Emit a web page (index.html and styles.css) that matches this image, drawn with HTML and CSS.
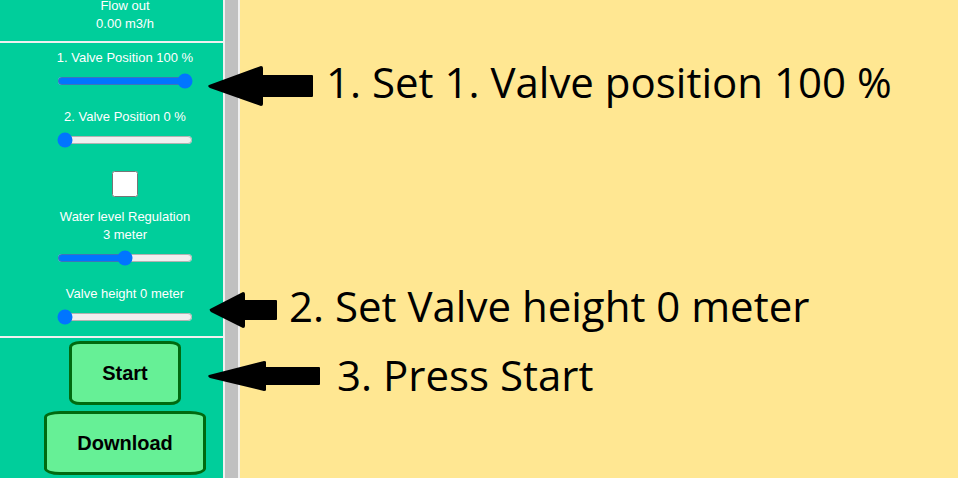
FILE: index.html
```html
<!DOCTYPE html>
<html lang="en">
<head>
<meta charset="utf-8">
<title>Valve control</title>
<link rel="stylesheet" href="styles.css">
</head>
<body>
<div class="app">
  <aside class="sidebar">
    <section class="reading">
      <div>Flow out</div>
      <div>0.00 m3/h</div>
    </section>
    <form class="controls">
      <div class="field">
        <label for="valve1">1. Valve Position 100 %</label>
        <input class="slider" id="valve1" type="range" min="0" max="100" value="100">
      </div>
      <div class="field">
        <label for="valve2">2. Valve Position 0 %</label>
        <input class="slider" id="valve2" type="range" min="0" max="100" value="0">
      </div>
      <div class="regulation">
        <input class="check" id="regulation" type="checkbox">
        <div class="field">
          <div class="caption">
            <label for="regulation">Water level Regulation</label>
            <label for="level">3 meter</label>
          </div>
          <input class="slider" id="level" type="range" min="0" max="6" value="3">
        </div>
      </div>
      <div class="field">
        <label for="height">Valve height 0 meter</label>
        <input class="slider" id="height" type="range" min="0" max="6" value="0">
      </div>
    </form>
    <section class="actions">
      <button class="action" type="button">Start</button>
      <button class="action" type="button">Download</button>
    </section>
  </aside>
  <div class="divider"></div>
  <main class="canvas"></main>
  <div class="callout callout-first">
    <svg width="106" height="40" viewBox="0 0 106 40" aria-hidden="true"><path d="M1 19 L53 0 Q55 0 55 2 V9 H104 Q105 9 105 10 V30 Q105 31 104 31 H55 V38 Q55 40 53 40 L2 22 Q-1 20 1 19Z"/></svg>
    <span>1. Set 1. Valve position 100 %</span>
  </div>
  <div class="callout callout-second">
    <svg width="69" height="38" viewBox="0 0 69 38" aria-hidden="true"><path d="M2 17 L35 0 Q37 0 37 2 V8 H68 Q69 8 69 9 V27 Q69 28 68 28 H37 V34 Q37 36 35 36 L3 20 Q1 18 2 17Z"/></svg>
    <span>2. Set Valve height 0 meter</span>
  </div>
  <div class="callout callout-third">
    <svg width="117" height="38" viewBox="0 0 117 38" aria-hidden="true"><path d="M1 14 L56 0 Q58 0 58 1 V6 H111 Q112 6 112 7 V23 Q112 24 111 24 H58 V29 Q58 30 56 30 L2 17 Q-1 15 1 14Z"/></svg>
    <span>3. Press Start</span>
  </div>
</div>
</body>
</html>
```
FILE: styles.css
```css
* {
  box-sizing: border-box;
}

body {
  margin: 0;
  overflow: hidden;
  font: 13px/18px "Liberation Sans", Arial, sans-serif;
}

.app {
  position: relative;
  display: flex;
  height: 100vh;
  overflow: hidden;
}

.sidebar {
  flex: 0 0 223px;
  background: #00ce9b;
  color: #fff;
  text-align: center;
}

.reading,
.controls,
.actions {
  padding-left: 27px;
}

/* The panel is scrolled slightly past the first reading. */
.reading {
  margin-top: -3px;
  padding-bottom: 8px;
}

.controls {
  display: flex;
  flex-direction: column;
  gap: 19px;
  padding-top: 6px;
  padding-bottom: 11px;
  border: solid #f0f0f0;
  border-width: 2px 0;
}

.field,
.caption,
.regulation,
.actions {
  display: flex;
  flex-direction: column;
  align-items: center;
}

.field {
  gap: 6px;
}

.regulation {
  gap: 11px;
  padding-top: 4px;
}

.slider {
  width: 136px;
  height: 16px;
  margin: 0;
}

.check {
  width: 26px;
  height: 26px;
  margin: 0;
}

.actions {
  gap: 6px;
  padding-top: 3px;
}

.action {
  padding: 18px 30px;
  border: 3px solid #006a10;
  border-radius: 10%;
  background: #66f096;
  color: #000;
  font: bold 20px/22px "Liberation Sans", Arial, sans-serif;
}

.divider {
  flex: 0 0 17px;
  border: solid #f0f0f0;
  border-width: 0 2px;
  background: #c0c0c0;
}

.canvas {
  flex: 1;
  background: #ffe792;
}

/* Instructions that lie over the panel and the canvas. */
.callout {
  position: absolute;
  left: 208px;
  display: flex;
  align-items: flex-end;
  gap: 12px;
  color: #000;
  font: 42px/48px "Open Sans", "Noto Sans", sans-serif;
  white-space: nowrap;
}

.callout-first {
  top: 58px;
}

.callout-second {
  top: 282px;
}

.callout-third {
  top: 351px;
}
```
